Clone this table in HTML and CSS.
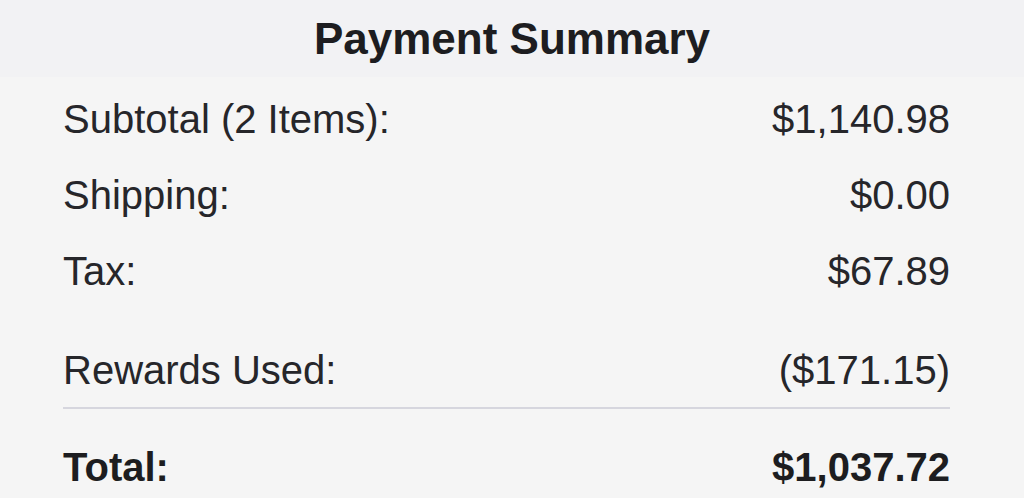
FILE: index.html
```html
<!DOCTYPE html>
<html>
<head>
<meta charset="utf-8">
<link rel="stylesheet" href="styles.css">
</head>
<body>
<div class="summary">
  <header class="summary-header">
    <h1 class="summary-title">Payment Summary</h1>
  </header>
  <div class="summary-body">
    <div class="row"><span>Subtotal (2 Items):</span><span>$1,140.98</span></div>
    <div class="row"><span>Shipping:</span><span>$0.00</span></div>
    <div class="row"><span>Tax:</span><span>$67.89</span></div>
    <div class="row row-rewards"><span>Rewards Used:</span><span>($171.15)</span></div>
    <hr class="divider">
    <div class="row row-total"><span>Total:</span><span>$1,037.72</span></div>
  </div>
</div>
</body>
</html>
```
FILE: styles.css
```css
html, body {
  margin: 0;
  padding: 0;
  background: #f5f5f5;
}
body {
  font-family: "Liberation Sans", Arial, sans-serif;
  color: #26262a;
  width: 1024px;
  height: 498px;
  overflow: hidden;
}
.summary-header {
  background: #f2f2f4;
  height: 77px;
  box-sizing: border-box;
  padding-top: 14px;
  text-align: center;
}
.summary-title {
  margin: 0;
  font-size: 44px;
  line-height: 50px;
  font-weight: bold;
  color: #1d1d20;
}
.summary-body {
  display: flex;
  flex-direction: column;
  gap: 28px;
  padding: 18px 74px 0 63px;
}
.row {
  display: flex;
  justify-content: space-between;
  font-size: 40px;
  line-height: 48px;
}
.row-rewards {
  margin-top: 23px;
}
.divider {
  border: 0;
  height: 2px;
  background: #d6d6de;
  margin: -15px 0 0 0;
}
.row-total {
  margin-top: 6px;
  font-weight: bold;
  color: #1d1d20;
}
```
